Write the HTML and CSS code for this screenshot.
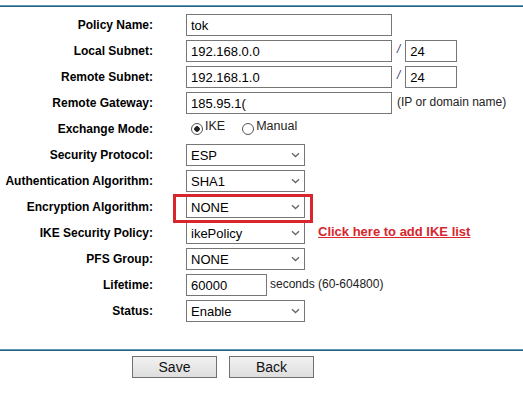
FILE: index.html
```html
<!DOCTYPE html>
<html lang="en">

<head>
    <meta charset="UTF-8">
    <title>IPSec Policy</title>
    <link rel="stylesheet" href="styles.css">
</head>

<body>
    <div class="rule"></div>

    <form class="policy" action="#" method="post">
        <label class="lbl">Policy Name:</label>
        <div class="field"><input class="txt" type="text" value="tok"></div>

        <label class="lbl">Local Subnet:</label>
        <div class="field">
            <input class="txt" type="text" value="192.168.0.0">
            <span class="slash">/</span>
            <input class="txt mask" type="text" value="24">
        </div>

        <label class="lbl">Remote Subnet:</label>
        <div class="field">
            <input class="txt" type="text" value="192.168.1.0">
            <span class="slash">/</span>
            <input class="txt mask" type="text" value="24">
        </div>

        <label class="lbl">Remote Gateway:</label>
        <div class="field">
            <input class="txt" type="text" value="185.95.1(">
            <span class="hint">(IP or domain name)</span>
        </div>

        <label class="lbl">Exchange Mode:</label>
        <div class="field radios">
            <label class="opt"><input type="radio" name="mode" checked> IKE</label>
            <label class="opt"><input type="radio" name="mode"> Manual</label>
        </div>

        <label class="lbl">Security Protocol:</label>
        <div class="field">
            <select class="sel"><option>ESP</option></select>
        </div>

        <label class="lbl">Authentication Algorithm:</label>
        <div class="field">
            <select class="sel"><option>SHA1</option></select>
        </div>

        <label class="lbl">Encryption Algorithm:</label>
        <div class="field">
            <span class="marked"><select class="sel"><option>NONE</option></select></span>
        </div>

        <label class="lbl">IKE Security Policy:</label>
        <div class="field">
            <select class="sel"><option>ikePolicy</option></select>
            <a class="add-link" href="#">Click here to add IKE list</a>
        </div>

        <label class="lbl">PFS Group:</label>
        <div class="field">
            <select class="sel"><option>NONE</option></select>
        </div>

        <label class="lbl">Lifetime:</label>
        <div class="field">
            <input class="txt life" type="text" value="60000">
            <span class="hint tight">seconds (60-604800)</span>
        </div>

        <label class="lbl">Status:</label>
        <div class="field">
            <select class="sel"><option>Enable</option></select>
        </div>
    </form>

    <div class="rule bottom"></div>

    <div class="buttons">
        <button class="btn" type="button">Save</button>
        <button class="btn" type="button">Back</button>
    </div>
</body>

</html>
```

FILE: styles.css
```css
body {
    font-family: 'Liberation Sans', Arial, sans-serif;
    margin: 0;
    padding: 0;
    background: #fff;
    color: #000;
    font-size: 12px;
}

.rule {
    margin-top: 5px;
    height: 0;
    border-top: 1px solid #5e9fb8;
    border-bottom: 1px solid #2c5f7c;
}

.rule.bottom {
    margin-top: 27px;
}

.policy {
    display: grid;
    grid-template-columns: 153px auto;
    column-gap: 33px;
    row-gap: 4px;
    padding-top: 7px;
    margin: 0;
}

.lbl {
    font-weight: bold;
    text-align: right;
    line-height: 22px;
    white-space: nowrap;
}

.field {
    display: flex;
    align-items: center;
    height: 22px;
}

.txt {
    box-sizing: border-box;
    width: 206px;
    height: 22px;
    border: 1px solid #767676;
    padding: 1px 4px 0;
    font-family: 'Liberation Sans', Arial, sans-serif;
    font-size: 13px;
    color: #000;
    margin: 0;
}

.txt.mask {
    width: 52px;
}

.txt.life {
    width: 81px;
}

.slash {
    color: #3a3f6b;
    font-style: italic;
    margin: -4px 5px 0 5px;
}

.hint {
    margin-left: 5px;
    margin-top: -3px;
    color: #222;
}

.hint.tight {
    margin-left: 3px;
}

.radios {
    padding-left: 5px;
}

.opt {
    display: flex;
    align-items: flex-start;
    margin-right: 17px;
    font-size: 12.5px;
    color: #222;
    line-height: 14px;
    margin-top: -4px;
}

.opt input {
    appearance: none;
    -webkit-appearance: none;
    box-sizing: border-box;
    width: 12px;
    height: 12px;
    margin: 4px 2px 0 0;
    border: 1px solid #555;
    border-radius: 50%;
    background: #fff;
}

.opt input:checked {
    background: radial-gradient(circle, #222 0 2.5px, #fff 3px);
}

.sel {
    appearance: none;
    -webkit-appearance: none;
    box-sizing: border-box;
    width: 119px;
    height: 22px;
    border: 1px solid #767676;
    border-radius: 0;
    padding: 1px 4px 0;
    margin: 0;
    font-family: 'Liberation Sans', Arial, sans-serif;
    font-size: 13px;
    color: #000;
    background: #fff url("data:image/svg+xml,%3Csvg xmlns='http://www.w3.org/2000/svg' width='9' height='6' viewBox='0 0 9 6'%3E%3Cpath d='M1 1.2 4.5 4.5 8 1.2' fill='none' stroke='%23666' stroke-width='1.3'/%3E%3C/svg%3E") no-repeat right 4px center;
}

.marked {
    position: relative;
    display: flex;
}

.marked::after {
    content: "";
    position: absolute;
    left: -13px;
    top: -2px;
    right: -8px;
    bottom: -5px;
    border: 3px solid #d7262e;
}

.add-link {
    color: #d7262e;
    font-weight: bold;
    font-size: 13px;
    margin-left: 13px;
    margin-top: -3px;
}

.buttons {
    display: flex;
    gap: 12px;
    padding: 5px 0 0 132px;
}

.btn {
    box-sizing: border-box;
    width: 85px;
    height: 22px;
    border: 1px solid #707070;
    background: linear-gradient(to bottom, #f2f2f2, #dedede);
    font-family: 'Liberation Sans', Arial, sans-serif;
    font-size: 14px;
    color: #111;
    padding: 0;
}
```
